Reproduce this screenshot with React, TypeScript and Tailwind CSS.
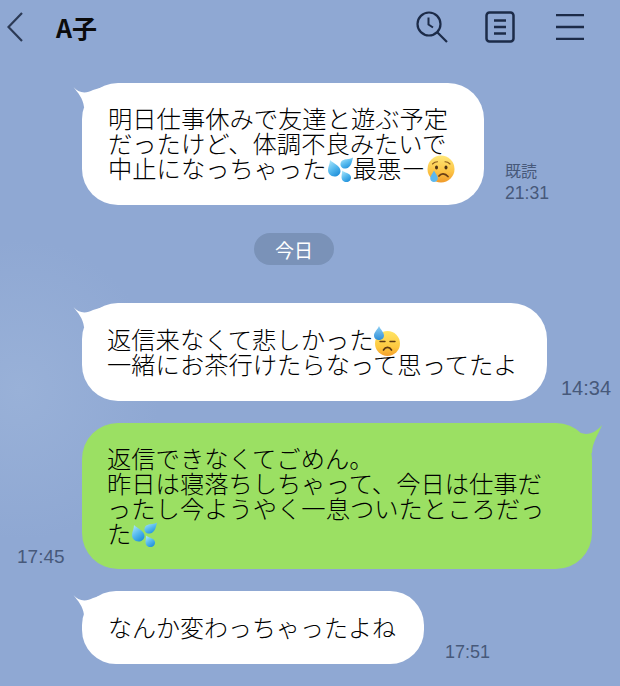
import React from "react";

const Drops = () => (
  <svg viewBox="0 0 26 26" className="-my-[8px] inline-block h-[26px] w-[26px] align-[4px]">
    <defs>
      <linearGradient id="drop" x1="0.2" y1="0" x2="0.8" y2="1">
        <stop offset="0" stopColor="#a8e4fa" />
        <stop offset="0.5" stopColor="#55b9ee" />
        <stop offset="1" stopColor="#1c8cd8" />
      </linearGradient>
    </defs>
    <path d="M3 4 C6 7 13.500 10 13.500 15 C13.500 18.500 10.500 20.500 7.500 20.500 C3.500 20.500 1 17.500 1 14 C1 10.500 3 8 3 4Z" fill="url(#drop)" />
    <path d="M26 1.500 C25 5 24.500 11.500 19 12.500 C15.500 13 13 10.500 13.500 7.500 C14 4.500 17 3.500 19.500 3.300 C22 3.100 24 2.800 26 1.500Z" fill="url(#drop)" />
    <path d="M15 14.500 C17 16.500 23.500 17 24 21 C24.300 24 22 26 19.500 26 C16.500 26 14.500 24 14.500 21 C14.500 18.500 15.300 17 15 14.500Z" fill="url(#drop)" />
  </svg>
);

const CryFace = () => (
  <svg viewBox="0 0 28 28" className="-my-[8px] ml-[1px] inline-block h-[28px] w-[28px] align-[3px]">
    <defs>
      <linearGradient id="cry" x1="0.5" y1="0" x2="0.5" y2="1">
        <stop offset="0" stopColor="#ffe878" />
        <stop offset="0.6" stopColor="#fcc344" />
        <stop offset="1" stopColor="#f09a2a" />
      </linearGradient>
    </defs>
    <circle cx="14" cy="14" r="13.500" fill="url(#cry)" />
    <ellipse cx="9.500" cy="12.500" rx="1.500" ry="1.900" fill="#4d3213" />
    <ellipse cx="19" cy="12.500" rx="1.500" ry="1.900" fill="#4d3213" />
    <path d="M5.500 9 C7 7.500 9 6.800 10.500 6.800 M18 6.800 C19.500 6.800 21.500 7.500 23 9" stroke="#8a5a1c" strokeWidth="1.100" fill="none" strokeLinecap="round" />
    <path d="M12 21 C14 18 18 18 21 21.500" stroke="#6b3f14" strokeWidth="1.700" fill="none" strokeLinecap="round" />
    <path d="M7 15.500 C8.500 19 10.800 20.500 10.800 23.300 C10.800 25.800 8.800 27 7 27 C5 27 3.200 25.800 3.200 23.300 C3.200 20.500 5.500 19 7 15.500Z" fill="#5cb8ee" />
  </svg>
);

const SweatFace = () => (
  <svg viewBox="0 0 26 30" className="-my-[8px] inline-block h-[30px] w-[26px] align-[1px]">
    <defs>
      <linearGradient id="sweat" x1="0.5" y1="0" x2="0.5" y2="1">
        <stop offset="0" stopColor="#ffe566" />
        <stop offset="0.65" stopColor="#fdc83f" />
        <stop offset="1" stopColor="#f4a02d" />
      </linearGradient>
      <linearGradient id="sweatDrop" x1="0.5" y1="0" x2="0.5" y2="1">
        <stop offset="0" stopColor="#8fd0f5" />
        <stop offset="1" stopColor="#2f8fd8" />
      </linearGradient>
    </defs>
    <circle cx="13.500" cy="17.500" r="12.500" fill="url(#sweat)" />
    <path d="M6 15.500 H11 M16 15.500 H21" stroke="#5e3a12" strokeWidth="1.400" strokeLinecap="round" />
    <path d="M9.500 24 C11.500 20.500 15.500 20.500 17.500 24" stroke="#5e3a12" strokeWidth="1.700" fill="none" strokeLinecap="round" />
    <path d="M5 0 C6.300 3.500 10 6 10 9.500 C10 12.500 7.500 14 5 14 C2.500 14 0 12.500 0 9.500 C0 6 3.700 3.500 5 0Z" fill="url(#sweatDrop)" />
  </svg>
);

const TailLeft = () => (
  <svg viewBox="0 0 30 24" className="absolute -left-[9px] top-0 h-[24px] w-[30px]">
    <path d="M0.500 4 C5 10 13 11 20 7 L30 4 L30 24 L11 24 C10 15 5 10 0.500 4Z" fill="#ffffff" />
  </svg>
);

const Time = ({ children, className }: { children: React.ReactNode; className: string }) => (
  <span className={`font-['Liberation_Sans',sans-serif] leading-[22px] text-[#47597a] ${className}`}>{children}</span>
);

const textClass = "pb-[3px] font-light leading-[25px] whitespace-nowrap text-black";

export default function App() {
  return (
    <div className="h-[686px] w-[620px] overflow-hidden bg-[#8fa8d3] bg-[radial-gradient(ellipse_140px_150px_at_20px_390px,#99b1d8_0%,#8fa8d3_100%)] font-['Noto_Sans_CJK_JP',sans-serif]">
      {/* header */}
      <header className="flex h-[54px] items-center text-[#1c2b48]">
        <svg viewBox="0 0 16 30" className="ml-[7px] h-[30px] w-[16px]" fill="none" stroke="#2c3a55" strokeWidth="2.200">
          <path d="M15 1 L1.500 15 L15 29" />
        </svg>
        <h1 className="ml-[33px] flex items-center text-[25px] font-bold leading-none text-[#0b0b0b]">A子</h1>
        <svg viewBox="0 0 32 32" className="ml-auto h-[32px] w-[32px]" fill="none" stroke="currentColor" strokeWidth="2.200">
          <circle cx="13" cy="13" r="11.500" />
          <path d="M21.500 21.500 L31 31" />
          <path d="M12.500 6.500 V13.500 L17 16.500" strokeWidth="2" />
        </svg>
        <svg viewBox="0 0 30 32" className="ml-[37px] h-[32px] w-[30px]" fill="none" stroke="currentColor" strokeWidth="2.500">
          <rect x="1.500" y="1.500" width="27" height="29" rx="3" />
          <path d="M9 9.500 H21 M9 16 H21 M9 22.500 H21" />
        </svg>
        <svg viewBox="0 0 28 26" className="ml-[41px] mr-[36px] h-[26px] w-[28px]" fill="none" stroke="currentColor" strokeWidth="2.300">
          <path d="M0 1 H28 M0 13 H28 M0 25 H28" />
        </svg>
      </header>

      <main className="flex flex-col pt-[29px]">
        <div className="ml-[82px] flex items-end">
          <div className="relative flex h-[122px] w-[402px] items-center rounded-[36px] bg-white pl-[26px]">
            <TailLeft />
            <p className={`${textClass} text-[24.3px]`}>
              明日仕事休みで友達と遊ぶ予定
              <br />
              だったけど、体調不良みたいで
              <br />
              中止になっちゃった<Drops />最悪ー<CryFace />
            </p>
          </div>
          <div className="mb-[1px] ml-[21px] flex flex-col">
            <span className="text-[16px] leading-[22px] text-[#47597a]">既読</span>
            <Time className="mt-[1px] text-[17.6px]">21:31</Time>
          </div>
        </div>

        <div className="ml-[254px] mt-[28px] flex h-[32px] w-[80px] items-center justify-center rounded-full bg-[#7a92b8] text-[19px] leading-none text-white">
          今日
        </div>

        <div className="ml-[82px] mt-[38px] flex items-end">
          <div className="relative flex h-[98px] w-[465px] items-center rounded-[36px] bg-white pl-[25px]">
            <TailLeft />
            <p className={`${textClass} text-[24.3px]`}>
              返信来なくて悲しかった<SweatFace />
              <br />
              一緒にお茶行けたらなって思ってたよ
            </p>
          </div>
          <Time className="mb-[2px] ml-[14px] text-[20px]">14:34</Time>
        </div>

        <div className="mt-[22px] flex items-end">
          <Time className="mb-[1px] ml-[17px] w-[65px] text-[19px]">17:45</Time>
          <div className="relative flex h-[146px] w-[510px] items-center rounded-[36px] bg-[#9be063] pl-[25px]">
            <svg viewBox="0 0 34 30" className="absolute -right-[12px] top-0 h-[30px] w-[34px]">
              <path d="M32 2 C28 7 22 11 16 11 L0 8 L0 30 L22 30 C22 20 28 12 32 2Z" fill="#9be063" />
            </svg>
            <p className={`${textClass} text-[24.3px]`}>
              返信できなくてごめん。
              <br />
              昨日は寝落ちしちゃって、今日は仕事だ
              <br />
              ったし今ようやく一息ついたところだっ
              <br />
              た<Drops />
            </p>
          </div>
        </div>

        <div className="ml-[82px] mt-[22px] flex items-end">
          <div className="relative flex h-[73px] w-[342px] items-center rounded-[34px] bg-white pl-[26px]">
            <TailLeft />
            <p className={`${textClass} text-[24px]`}>なんか変わっちゃったよね</p>
          </div>
          <Time className="mb-[1px] ml-[21px] text-[18px]">17:51</Time>
        </div>
      </main>
    </div>
  );
}
